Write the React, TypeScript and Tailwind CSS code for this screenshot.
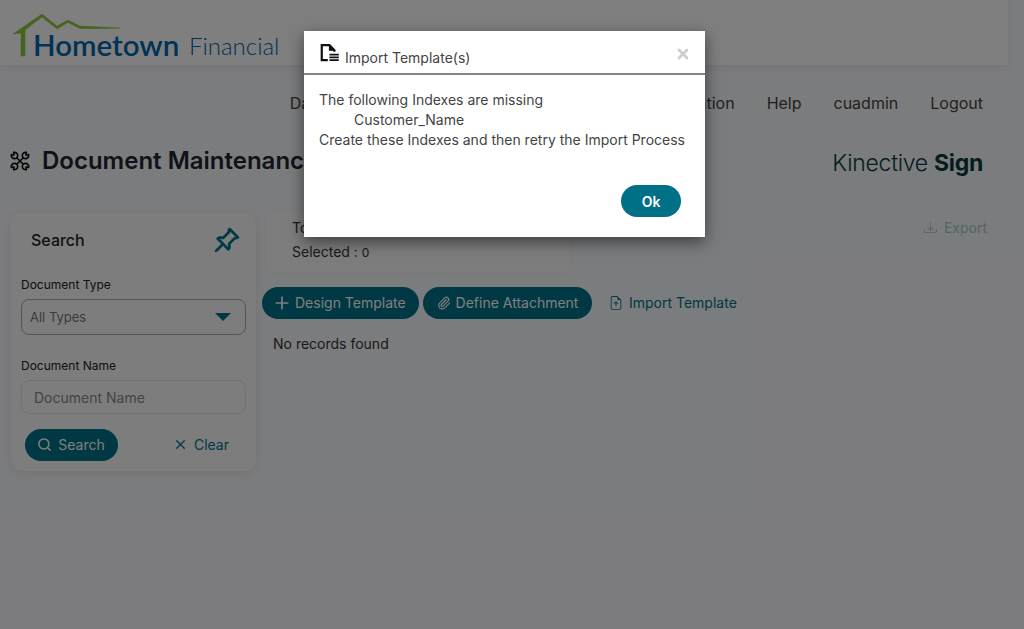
import React from 'react';
import { Search, X, Plus, Paperclip } from 'lucide-react';
import { BsPinAngle, BsFileEarmarkArrowUp, BsDownload } from 'react-icons/bs';

const navItems = ['Documents', 'Reporting', 'Administration', 'Help', 'cuadmin', 'Logout'];

const Logo = () => (
  <div className="relative h-[65px] w-[290px]">
    <svg className="absolute left-[12px] top-[12px]" width="115" height="46" viewBox="0 0 115 46" fill="none">
      <path d="M1 22 L30 2 L45 14 L56 8 L68 14 Q90 15 108 16 Q88 17 68 16.5 L56 10.5 L45 17 L30 5 L13 18 L13 44 L9 44 L9 21 Z" fill="#8cc63f" stroke="#8cc63f" strokeWidth="0.5" />
    </svg>
    <span className="absolute left-[33px] top-[27px] font-['Lato',sans-serif] text-[29.5px] leading-[36px] font-semibold text-[#0066ab]">Hometown</span>
    <span className="absolute left-[189px] top-[31px] font-['Lato',sans-serif] text-[24px] leading-[30px] font-light text-[#0066ab]">Financial</span>
  </div>
);

const ToolsIcon = () => (
  <svg width="20" height="20" viewBox="0 0 20 20" fill="none" stroke="#111" strokeWidth="1.7" strokeLinejoin="round" strokeLinecap="round">
    {[0, 90, 180, 270].map(angle => (
      <g key={angle} transform={`rotate(${angle} 10 10)`}>
        <path d="M3.67 1.4 A3.2 3.2 0 1 1 1.4 3.67 L4 4 Z" />
        <path d="M7 7 L10 10" />
      </g>
    ))}
  </svg>
);

const ModalIcon = () => (
  <svg width="22" height="22" viewBox="0 0 20 20" fill="none" className="mb-[3px] shrink-0">
    <path d="M8 15.5H2.5V2H9.5L14 6.5V8" stroke="#111" strokeWidth="2" />
    <path d="M9.5 2V6.5H14Z" fill="#111" stroke="#111" strokeWidth="1" />
    <path d="M9.5 10.5H18M9.5 13H18M9.5 15.5H18" stroke="#111" strokeWidth="1.6" />
  </svg>
);

export default function App() {
  return (
    <div className="relative h-[629px] w-[1024px] overflow-hidden bg-[#f7f8fb] font-['Inter',sans-serif]">
      {/* header */}
      <header className="h-[65px] w-[1008px] bg-white shadow-[0_2px_8px_rgba(0,0,0,0.07)]">
        <Logo />
      </header>

      {/* nav */}
      <nav className="flex h-[76px] items-center justify-end gap-[32px] pr-[41px] text-[16px] text-[#444]">
        <span className="-mr-[2px] whitespace-nowrap">Dashboard</span>
        {navItems.map(item => (
          <span key={item} className="whitespace-nowrap">{item}</span>
        ))}
      </nav>

      {/* title row */}
      <div className="flex h-[40px] items-center justify-between pl-[10px] pr-[41px]">
        <div className="flex items-center gap-[12px]">
          <ToolsIcon />
          <h1 className="text-[24px] font-semibold text-[#1f2430]">Document Maintenance</h1>
        </div>
        <div className="pt-[4px] text-[23px] font-light tracking-[-0.3px] text-[#0b3b3c]">
          Kinective <span className="font-bold">Sign</span>
        </div>
      </div>

      {/* content */}
      <div className="flex items-start pt-[32px]">
        {/* search */}
        <aside className="ml-[11px] flex h-[258px] w-[245px] flex-col rounded-xl bg-[#fbfbfc] px-[10px] shadow-[0_2px_10px_rgba(0,0,0,0.08)]">
          <div className="flex h-[54px] items-center justify-between pl-[10px] pr-[6px]">
            <span className="text-[16px] font-medium text-[#222]">Search</span>
            <BsPinAngle size={27} className="text-[#007086]" strokeWidth={0.6} />
          </div>
          <label className="mt-[10px] text-[12px] leading-[16px] text-[#222]">Document Type</label>
          <div className="mt-[6px] flex h-[36px] items-center justify-between rounded-lg border border-[#aaa] pl-[8px] pr-[14px] text-[13px] text-[#777]">
            <span className="pt-[2px]">All Types</span>
            <span className="h-0 w-0 border-x-[8px] border-t-[8px] border-x-transparent border-t-[#007086]" />
          </div>
          <label className="mt-[23px] text-[12px] leading-[16px] text-[#222]">Document Name</label>
          <div className="mt-[6px] flex h-[34px] items-center rounded-lg border border-[#e2e2e2] pl-[12px] text-[14px] text-[#888]">
            Document Name
          </div>
          <div className="mt-[15px] flex items-center justify-between pl-[4px] pr-[17px]">
            <button className="flex h-[32px] w-[93px] items-center justify-center gap-[6px] rounded-full bg-[#007086] pb-[1px] pr-[1px] text-[14px] text-white">
              <Search size={15} strokeWidth={2.4} />
              Search
            </button>
            <button className="flex items-center gap-[6px] pb-[1px] text-[14px] text-[#007086]">
              <X size={15} />
              Clear
            </button>
          </div>
        </aside>

        {/* results */}
        <main className="flex-1 -mt-[3px] pl-[6px]">
          <div className="flex items-start justify-between">
            <div className="ml-[4px] h-[62px] w-[304px] rounded-lg bg-[#fbfbfc] pl-[26px] pt-[6px] text-[14px] leading-[24px] text-[#333] shadow-[0_1px_4px_rgba(0,0,0,0.04)]">
              <div>Total : 0</div>
              <div>Selected : <span className="text-[12px]">0</span></div>
            </div>
            <div className="mr-[37px] mt-[7px] flex items-center gap-[7px] text-[14px] text-[#a9c6cd]">
              <BsDownload size={13} />
              Export
            </div>
          </div>
          <div className="mt-[15px] flex items-center gap-[4px]">
            <button className="flex h-[32px] w-[157px] items-center gap-[3px] rounded-full bg-[#007086] pb-[1px] pl-[10px] text-[14px] text-white">
              <Plus size={20} />
              Design Template
            </button>
            <button className="flex h-[32px] w-[169px] items-center justify-center gap-[5px] rounded-full bg-[#007086] pb-[1px] text-[14px] text-white">
              <Paperclip size={14} />
              Define Attachment
            </button>
            <button className="ml-[13px] flex items-center gap-[6px] pb-[1px] text-[14px] text-[#007086]">
              <BsFileEarmarkArrowUp size={14} />
              Import Template
            </button>
          </div>
          <p className="ml-[11px] mt-[15px] text-[14px] leading-[20px] text-[#333]">No records found</p>
        </main>
      </div>

      {/* backdrop */}
      <div className="absolute inset-0 bg-black/50" />

      {/* modal */}
      <div className="absolute left-[304px] top-[31px] flex h-[206px] w-[401px] flex-col bg-white shadow-[0_5px_15px_rgba(0,0,0,0.5)]">
        <div className="flex h-[44px] items-end border-b-2 border-[#858585] pb-[5px] pl-[15px] pr-[14px]">
          <ModalIcon />
          <span className="ml-[4px] text-[14px] leading-[20px] text-[#444]">Import Template(s)</span>
          <X size={16} strokeWidth={4} className="ml-auto mb-[6px] text-[#ccc]" />
        </div>
        <div className="pl-[15px] pt-[15px] text-[14px] leading-[20px] text-[#444]">
          <div>The following Indexes are missing</div>
          <div className="pl-[35px]">Customer_Name</div>
          <div>Create these Indexes and then retry the Import Process</div>
        </div>
        <div className="mt-auto flex justify-end pb-[20px] pr-[24px]">
          <button className="h-[32px] w-[60px] rounded-full bg-[#007086] text-[14px] font-semibold text-white">Ok</button>
        </div>
      </div>
    </div>
  );
}
